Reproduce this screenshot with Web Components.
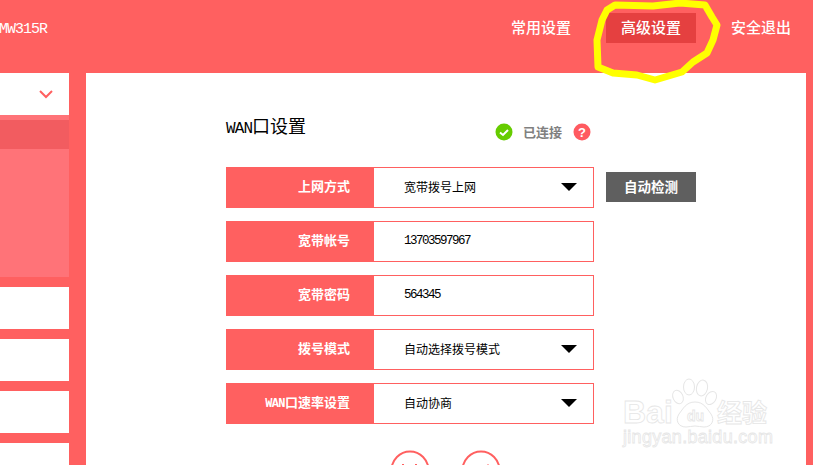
<!DOCTYPE html>
<html>
<head>
<meta charset="utf-8">
<title>WAN</title>
<style>
  html, body { margin: 0; padding: 0; background: #ff6060; }
</style>
</head>
<body>
<router-page></router-page>

<script>
class RouterHeader extends HTMLElement {
  constructor() {
    super();
    const shadow = this.attachShadow({ mode: 'open' });
    shadow.innerHTML = `
      <style>
        :host {
          display: flex;
          flex: none;
          align-items: flex-start;
          height: 73px;
          background: #ff6060;
          color: #fff;
          font-family: "Noto Sans CJK SC", sans-serif;
        }
        .model {
          flex: 1;
          margin: 22px 0 0 -1px;
          font: 15px/16px "Liberation Mono", monospace;
          letter-spacing: -1px;
        }
        nav {
          display: flex;
          gap: 20px;
          margin: 13px 7px 0 0;
        }
        a {
          display: block;
          width: 90px;
          height: 30px;
          line-height: 28px;
          text-align: center;
          font-size: 15px;
          font-weight: 500;
          color: #fff;
          text-decoration: none;
        }
        a.on { background: #e54040; }
      </style>
      <span class="model">MW315R</span>
      <nav>
        <a href="#">常用设置</a>
        <a href="#" class="on">高级设置</a>
        <a href="#">安全退出</a>
      </nav>`;
  }
}

class SideMenu extends HTMLElement {
  constructor() {
    super();
    const shadow = this.attachShadow({ mode: 'open' });
    shadow.innerHTML = `
      <style>
        :host {
          display: flex;
          flex: none;
          flex-direction: column;
          width: 69px;
          margin-right: 17px;
        }
        :host > * { flex: none; }
        .top {
          display: flex;
          justify-content: flex-end;
          align-items: center;
          height: 42px;
          padding-right: 16px;
          box-sizing: border-box;
          background: #fff;
        }
        .open {
          height: 162px;
          padding-top: 5px;
          box-sizing: border-box;
          background: #ff7378;
          margin-bottom: 10px;
        }
        .open div { height: 29px; background: #f25c60; }
        .item { height: 42px; background: #fff; margin-bottom: 10px; }
      </style>
      <div class="top">
        <svg width="14" height="9" viewBox="0 0 14 9"><path d="M1 1l6 6 6-6" fill="none" stroke="#ff6060" stroke-width="2"/></svg>
      </div>
      <div class="open"><div></div></div>
      <div class="item"></div>
      <div class="item"></div>
      <div class="item"></div>
      <div class="item"></div>`;
  }
}

class FormRow extends HTMLElement {
  constructor() {
    super();
    const shadow = this.attachShadow({ mode: 'open' });
    const arrow = this.hasAttribute('select')
      ? '<svg width="16" height="8" viewBox="0 0 16 8"><path d="M0 0h16L8 8z" fill="#000"/></svg>'
      : '';
    shadow.innerHTML = `
      <style>
        :host {
          display: flex;
          width: 368px;
          height: 41px;
          box-sizing: border-box;
          font-family: "Noto Sans CJK SC", sans-serif;
          font-size: 12px;
        }
        .label {
          flex: none;
          width: 148px;
          padding-right: 24px;
          box-sizing: border-box;
          background: #ff6060;
          color: #fff;
          font-size: 13px;
          font-weight: 700;
          text-align: right;
          line-height: 38px;
        }
        .field {
          flex: 1;
          display: flex;
          align-items: center;
          justify-content: space-between;
          padding: 0 16px 2px 30px;
          border: 1px solid #ff6060;
          border-left: none;
          color: #000;
        }
      </style>
      <div class="label"><slot name="label"></slot></div>
      <div class="field"><slot></slot>${arrow}</div>`;
  }
}

class WanPanel extends HTMLElement {
  constructor() {
    super();
    const shadow = this.attachShadow({ mode: 'open' });
    shadow.innerHTML = `
      <style>
        :host {
          display: block;
          flex: 1;
          background: #fff;
          padding: 42px 0 0 140px;
          overflow: hidden;
          font-family: "Noto Sans CJK SC", sans-serif;
        }
        .head {
          display: flex;
          align-items: center;
          width: 368px;
          height: 22px;
          margin-bottom: 30px;
        }
        h1 {
          flex: 1;
          margin: 0;
          font-size: 18px;
          font-weight: 400;
          color: #000;
          line-height: 22px;
        }
        h1 span { font: 16px "Liberation Mono", monospace; letter-spacing: -.9px; }
        .status {
          display: flex;
          align-items: center;
          margin: 11px 3px 0 0;
          font-size: 13px;
          font-weight: 700;
          color: #808080;
        }
        .status svg:first-child { margin-right: 10px; }
        .status svg:last-child { margin-left: 11px; }
        .line { display: flex; align-items: flex-start; gap: 12px; }
        .rows { display: flex; flex-direction: column; gap: 13px; }
        button {
          width: 90px;
          height: 30px;
          margin-top: 5px;
          padding: 0 0 2px;
          border: none;
          background: #5f5f5f;
          color: #fff;
          font: 700 13.5px "Noto Sans CJK SC", sans-serif;
        }
        .actions { display: flex; gap: 31px; margin: 26px 0 0 164px; }
        .actions svg { display: block; flex: none; }
      </style>
      <div class="head">
        <h1><span>WAN</span>口设置</h1>
        <div class="status">
          <svg width="18" height="18" viewBox="0 0 18 18"><circle cx="9" cy="9" r="8.5" fill="#66cc00"/><path d="M5 9.5l3 2.5 5-5" fill="none" stroke="#fff" stroke-width="2"/></svg>
          已连接
          <svg width="18" height="18" viewBox="0 0 18 18"><circle cx="9" cy="9" r="8.5" fill="#ff5a60"/><text x="9" y="13.5" text-anchor="middle" font-family="Liberation Sans" font-size="13" font-weight="700" fill="#fff">?</text></svg>
        </div>
      </div>
      <div class="line">
        <div class="rows"><slot></slot></div>
        <button>自动检测</button>
      </div>
      <div class="actions">
        <svg width="40" height="40" viewBox="0 0 40 40"><circle cx="20" cy="20" r="18.5" fill="none" stroke="#ff6060" stroke-width="2"/><path d="M13 14v1.500M26 14v1.500" stroke="#ff6060" stroke-width="2"/></svg>
        <svg width="40" height="40" viewBox="0 0 40 40"><circle cx="20" cy="20" r="18.5" fill="none" stroke="#ff6060" stroke-width="2"/><path d="M27 14v1.500" stroke="#ff9a9a" stroke-width="1.500"/></svg>
      </div>`;
  }
}

class BaiduMark extends HTMLElement {
  constructor() {
    super();
    const shadow = this.attachShadow({ mode: 'open' });
    shadow.innerHTML = `
      <style>
        :host { position: absolute; left: 620px; top: 375px; width: 155px; height: 80px; pointer-events: none; }
        svg { display: block; }
        text { fill: #fff; stroke: #e6e6e6; stroke-width: .8px; }
      </style>
      <svg width="155" height="80" viewBox="0 0 155 80">
        <text x="3" y="48" font-family="Liberation Sans" font-size="32" font-weight="700">Bai</text>
        <g fill="#fff" stroke="#e6e6e6" stroke-width="1">
          <ellipse cx="58" cy="22" rx="5" ry="7" transform="rotate(-25 58 22)"/>
          <ellipse cx="69" cy="12" rx="5.500" ry="8"/>
          <ellipse cx="82" cy="13" rx="5.500" ry="8" transform="rotate(12 82 13)"/>
          <ellipse cx="91" cy="23" rx="5" ry="7" transform="rotate(30 91 23)"/>
          <path d="M66 52c-8 0-11-7-7-13 4-5 7-12 16-12s12 7 16 12c4 6 1 13-7 13-3 0-6-1-9-1s-6 1-9 1z"/>
        </g>
        <text x="67" y="46" font-family="Liberation Sans" font-size="14" font-weight="700">du</text>
        <text x="97" y="47" font-family="Noto Sans CJK SC" font-size="25" font-weight="700">经验</text>
        <text x="3" y="68" font-family="Liberation Sans" font-size="18" letter-spacing=".3">jingyan.baidu.com</text>
      </svg>`;
  }
}

class RouterPage extends HTMLElement {
  constructor() {
    super();
    const shadow = this.attachShadow({ mode: 'open' });
    shadow.innerHTML = `
      <style>
        :host {
          display: flex;
          flex-direction: column;
          position: relative;
          width: 813px;
          height: 465px;
          overflow: hidden;
          background: #ff6060;
        }
        .body { display: flex; height: 392px; padding-right: 7px; }
        .scribble { position: absolute; left: 0; top: 0; pointer-events: none; }
        .num { font: 12.5px "Liberation Mono", monospace; letter-spacing: -1.500px; }
        .wan { font: 700 12px "Liberation Mono", monospace; letter-spacing: -.6px; }
      </style>
      <router-header></router-header>
      <div class="body">
        <side-menu></side-menu>
        <wan-panel>
          <form-row select><span slot="label">上网方式</span>宽带拨号上网</form-row>
          <form-row><span slot="label">宽带帐号</span><span class="num">13703597967</span></form-row>
          <form-row><span slot="label">宽带密码</span><span class="num">564345</span></form-row>
          <form-row select><span slot="label">拨号模式</span>自动选择拨号模式</form-row>
          <form-row select><span slot="label"><span class="wan">WAN</span>口速率设置</span>自动协商</form-row>
        </wan-panel>
      </div>
      <baidu-mark></baidu-mark>
      <svg class="scribble" width="813" height="465">
        <path d="M615 5L653 6L680 3L705 5L712 17L717 25L713 40L707 53L693 62L682 72L655 80L637 75L613 73L598 67L597 40L602 20L607 10Z" fill="none" stroke="#ffff00" stroke-width="7" stroke-linejoin="round"/>
      </svg>`;
  }
}

customElements.define('router-header', RouterHeader);
customElements.define('side-menu', SideMenu);
customElements.define('form-row', FormRow);
customElements.define('wan-panel', WanPanel);
customElements.define('baidu-mark', BaiduMark);
customElements.define('router-page', RouterPage);
</script>
</body>
</html>
